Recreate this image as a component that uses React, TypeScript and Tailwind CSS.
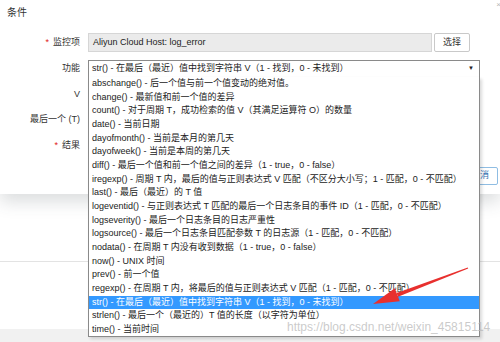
const options = [
  'abschange() - 后一个值与前一个值变动的绝对值。',
  'change() - 最新值和前一个值的差异',
  'count() - 对于周期 T，成功检索的值 V（其满足运算符 O）的数量',
  'date() - 当前日期',
  'dayofmonth() - 当前是本月的第几天',
  'dayofweek() - 当前是本周的第几天',
  'diff() - 最后一个值和前一个值之间的差异（1 - true，0 - false）',
  'iregexp() - 周期 T 内，最后的值与正则表达式 V 匹配（不区分大小写；1 - 匹配，0 - 不匹配）',
  'last() - 最后（最近）的 T 值',
  'logeventid() - 与正则表达式 T 匹配的最后一个日志条目的事件 ID（1 - 匹配，0 - 不匹配）',
  'logseverity() - 最后一个日志条目的日志严重性',
  'logsource() - 最后一个日志条目匹配参数 T 的日志源（1 - 匹配，0 - 不匹配）',
  'nodata() - 在周期 T 内没有收到数据（1 - true，0 - false）',
  'now() - UNIX 时间',
  'prev() - 前一个值',
  'regexp() - 在周期 T 内，将最后的值与正则表达式 V 匹配（1 - 匹配，0 - 不匹配）',
  'str() - 在最后（最近）值中找到字符串 V（1 - 找到，0 - 未找到）',
  'strlen() - 最后一个（最近的）T 值的长度（以字符为单位）',
  'time() - 当前时间',
]

const selected = 16

function Label({ text, required }: { text: string; required?: boolean }) {
  return (
    <div className="w-[82px] pr-[2px] text-right text-[9px] text-[#333]">
      {required && <span className="text-[#e02020] mr-[4px]">*</span>}
      {text}
    </div>
  )
}

export default function App() {
  return (
    <div className="relative w-[500px] h-[342px] overflow-hidden bg-white flex flex-col font-['Liberation_Sans','Noto_Sans_CJK_SC',sans-serif] text-[9px] text-[#222]">
      {/* dialog */}
      <div className="relative z-10 h-[194px] shrink-0 bg-white shadow-[0_8px_16px_rgba(60,70,80,0.18)] flex flex-col">
        <div className="h-[30px] pl-[7px] pt-[7px] text-[10px] leading-[12px] text-[#333]">条件</div>
        <span className="absolute right-[-1px] top-[-1px] text-[8px] text-[#b5b5b5]">×</span>

        <div className="flex items-center h-[25.75px]">
          <Label text="监控项" required />
          <div className="ml-[6px] w-[344px] h-[19px] bg-[#ebebeb] border border-[#d6d6d6] pl-[4px] flex items-center">
            Aliyun Cloud Host: log_error
          </div>
          <button className="ml-[2px] w-[36px] h-[19px] bg-white border border-[#c9c9c9] rounded-[2px] text-[9px] text-[#333]">
            选择
          </button>
        </div>

        <div className="flex items-center h-[25.75px]">
          <Label text="功能" />
          <div className="ml-[6px] w-[392px] h-[18px] border border-[#8a8a8a] border-b-[#3f78b8] pl-[3px] pr-[5px] flex items-center justify-between bg-white">
            <span className="whitespace-nowrap">{options[selected]}</span>
            <span className="text-[6px] text-[#222]">▼</span>
          </div>
        </div>

        <div className="flex items-center h-[25.75px]">
          <Label text="V" />
        </div>
        <div className="flex items-center h-[25.75px]">
          <Label text="最后一个 (T)" />
        </div>
        <div className="flex items-center h-[25.75px]">
          <Label text="结果" required />
        </div>

        <div className="flex justify-end pr-[2px] pt-[8px]">
          <button className="w-[36px] h-[18px] bg-white border border-[#8fbde3] rounded-[2px] text-[9px] text-[#2f6fb0]">
            取消
          </button>
        </div>
      </div>

      {/* page behind */}
      <div className="h-[68px] shrink-0 border-b border-[#e3e3e3]" />
      <div className="h-[67px] shrink-0 bg-white" />
      <div className="flex-1 bg-[#f1f1f1]" />

      {/* open dropdown */}
      <div className="absolute z-20 left-[88px] top-[77px] w-[392px] border border-[#8a8a8a] border-t-0 bg-white shadow-[2px_2px_3px_rgba(0,0,0,0.15)]">
        {options.map((o, i) => (
          <div
            key={o}
            className={
              i === selected
                ? 'h-[13.67px] leading-[13.67px] pl-[3px] whitespace-nowrap bg-[#3399ff] text-white'
                : 'h-[13.67px] leading-[13.67px] pl-[3px] whitespace-nowrap text-[#222]'
            }
          >
            {o}
          </div>
        ))}
      </div>

      {/* annotation arrow */}
      <svg className="absolute z-30 left-0 top-0 pointer-events-none" width="500" height="342">
        <polygon points="373,304 394.8,288.3 399.8,301.3" fill="#e8302e" />
        <polygon points="396.6,292.9 398,296.7 468.2,268.5 467.8,267.5" fill="#e8302e" />
      </svg>

      {/* watermark */}
      <div className="absolute z-30 left-[287px] top-[320px] text-[12px] leading-[14px] text-[rgba(185,185,185,0.75)] whitespace-nowrap">
        https://blog.csdn.net/weixin_45815114
      </div>
    </div>
  )
}
